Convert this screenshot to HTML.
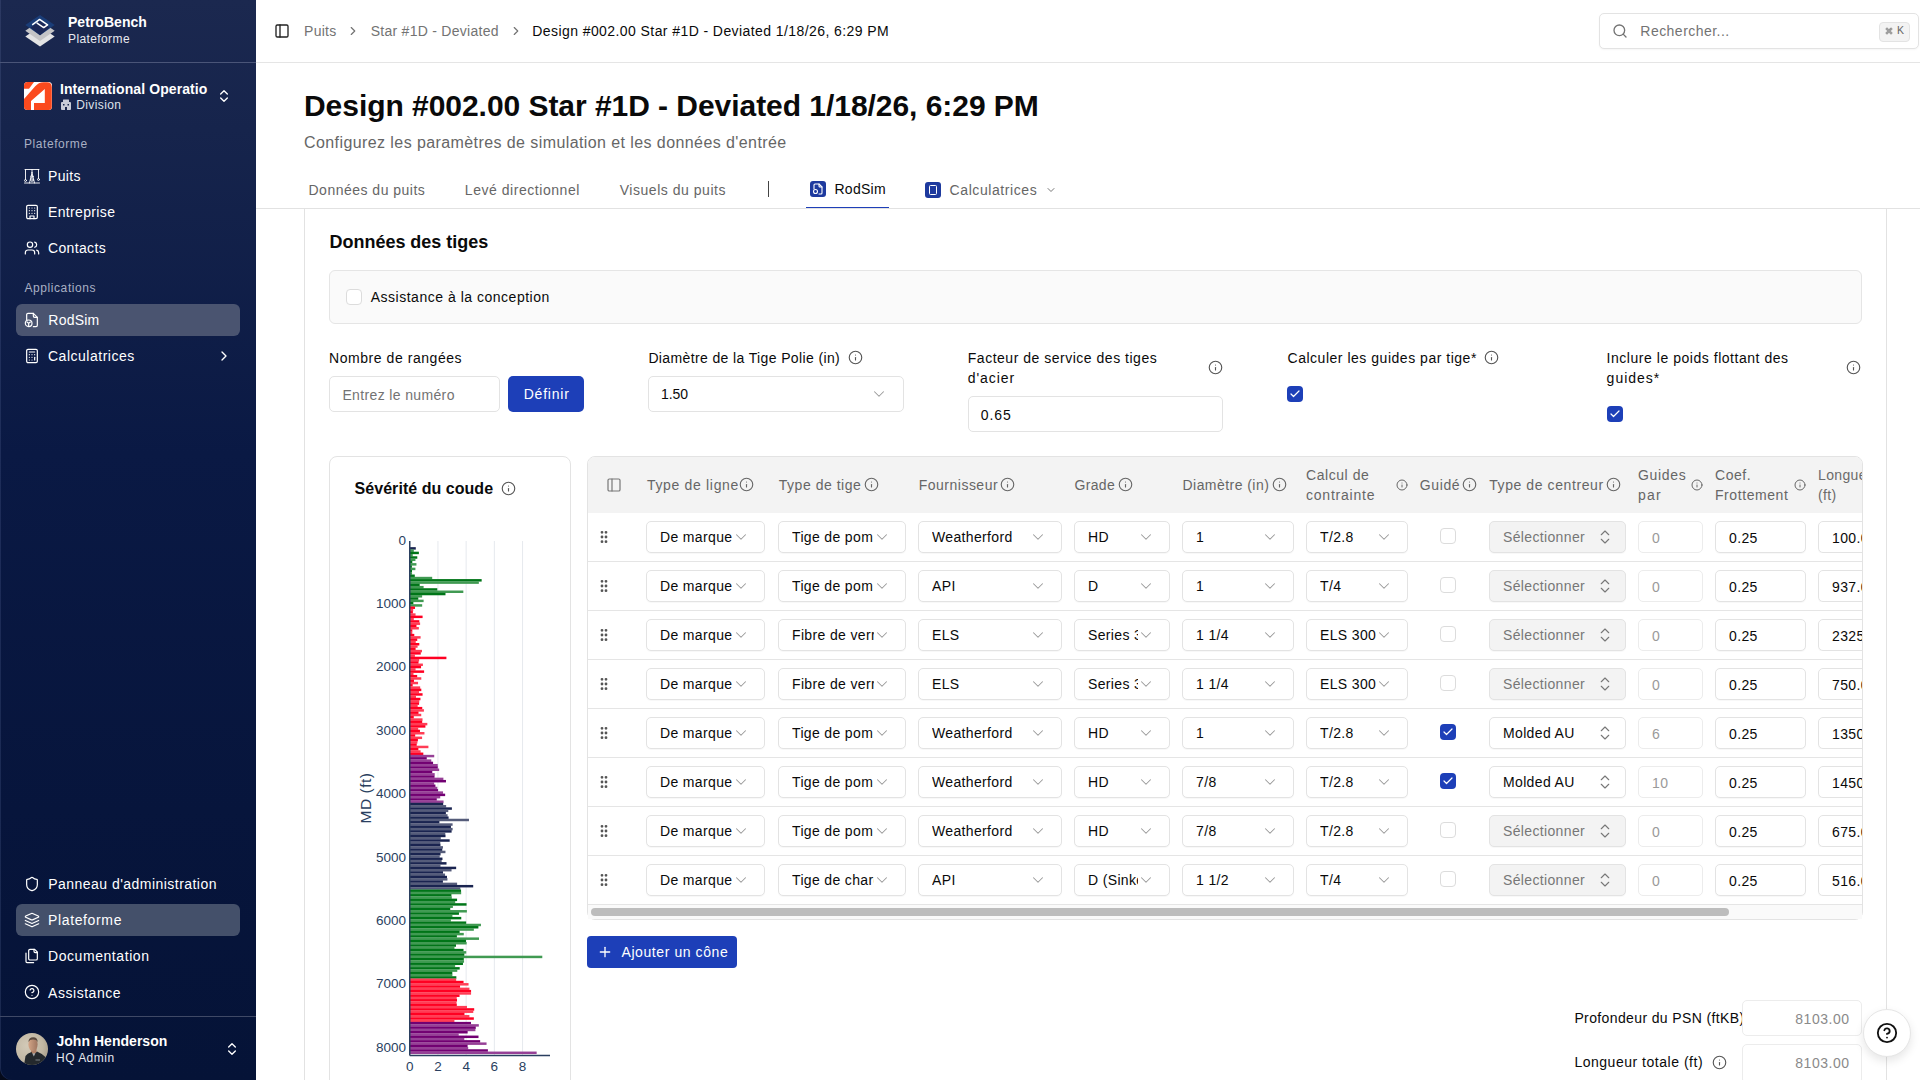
<!DOCTYPE html><html><head><meta charset="utf-8"><style>
*{box-sizing:border-box;margin:0;padding:0}
html,body{width:1920px;height:1080px;overflow:hidden;background:#fff;font-family:"Liberation Sans", sans-serif}
.t{position:absolute;white-space:nowrap}
.a{position:absolute}
.sel{position:absolute;height:32px;border:1px solid #e3e3e3;border-radius:5px;background:#fff;box-shadow:0 1px 1px rgba(0,0,0,0.03);overflow:hidden}
.sel .v{position:absolute;left:13px;top:0;line-height:30px;font-size:14px;color:#0a0a0a;white-space:nowrap;letter-spacing:0.35px}
</style></head><body>
<div class="a" style="left:0;top:0;width:256px;height:1080px;background:#050a1a"></div>
<div class="a" style="left:0;top:0;width:256px;height:1080px;border-bottom-left-radius:12px;box-shadow:inset 1px 0 0 rgba(120,140,190,0.18);background:linear-gradient(180deg,rgb(27,40,79) 0%,rgb(22,36,76) 12%,rgb(10,25,68) 42%,rgb(7,21,60) 75%,rgb(5,19,55) 100%);color:#fff">
<svg class="a" style="left:20px;top:10px" width="40" height="40" viewBox="0 0 40 40">
<polygon points="20,16.4 34.7,26.5 20,36.6 5.3,26.5" fill="#e3e3e4"/>
<polygon points="20,10.7 34.7,20.8 20,30.9 5.3,20.8" fill="#c4c4c6"/>
<polygon points="20,5 34.7,15.1 20,25.2 5.3,15.1" fill="#1a3d78"/>
<polygon points="20,11 29.5,17.6 20,25.2 10.5,17.6" fill="#1b2857"/>
<path d="M12.2 14.8 L19.6 9.4 L27.6 14.8 L23.7 17.6 L16.7 12.8" stroke="#fff" stroke-width="1.5" fill="none" stroke-linejoin="round"/>
</svg>
<div class="t" style="left:68px;top:15.15px;font-size:14px;line-height:14px;color:#fff;font-weight:700;letter-spacing:0.028px;">PetroBench</div>
<div class="t" style="left:68px;top:33.34px;font-size:12px;line-height:12px;color:#e8eaf0;font-weight:400;letter-spacing:0.393px;">Plateforme</div>
<div class="a" style="left:0;top:62px;width:256px;height:1px;background:#4a5578"></div>
<svg class="a" style="left:24px;top:82px" width="28" height="28" viewBox="0 0 28 28">
<defs><clipPath id="oc"><rect width="28" height="28" rx="3.5"/></clipPath></defs>
<g clip-path="url(#oc)"><rect width="28" height="28" fill="#fff"/>
<polygon points="0,0 10,0 5,6.8 0,6.8" fill="#fb4a1e"/>
<path d="M0 17 L11 4.6 Q14.6 0.3 19.5 0.3 H23 Q27.8 0.3 27.8 5.2 V28 H10 V21 H20.8 V7 L7 19 V28 H0 Z" fill="#fb4a1e"/></g>
</svg>
<div class="t" style="left:60px;top:81.65px;font-size:14px;line-height:14px;color:#fff;font-weight:700;letter-spacing:0.09px;">International Operatio</div>
<svg class="a" style="left:60px;top:99px" width="12" height="11" viewBox="0 0 12 11"><rect x="1" y="3" width="10" height="8" rx="1" fill="#c8ccd8"/><rect x="3" y="0.5" width="6" height="4" rx="0.5" fill="#c8ccd8"/><rect x="3" y="5" width="1.5" height="1.5" fill="#1b284f"/><rect x="7.5" y="5" width="1.5" height="1.5" fill="#1b284f"/><rect x="5" y="8" width="2" height="3" fill="#1b284f"/></svg>
<div class="t" style="left:76.25px;top:99.09px;font-size:12px;line-height:12px;color:#dfe2ea;font-weight:400;letter-spacing:0.396px;">Division</div>
<svg style="position:absolute;left:216px;top:88px" width="16" height="16" viewBox="0 0 24 24" fill="none" stroke="#fff" stroke-width="2" stroke-linecap="round" stroke-linejoin="round" ><path d="m7 15 5 5 5-5"/><path d="m7 9 5-5 5 5"/></svg>
<div class="t" style="left:24px;top:137.74px;font-size:12px;line-height:12px;color:#a9b0c4;font-weight:400;letter-spacing:0.559px;">Plateforme</div>
<svg style="position:absolute;left:24px;top:168px" width="16" height="16" viewBox="0 0 16 16" fill="none" stroke="#fff" stroke-width="0.9" stroke-linecap="round" stroke-linejoin="round" ><path d="M1 1.5h14"/><path d="M1.5 1.5v10M14.5 1.5v9"/><circle cx="1.5" cy="12.5" r="1"/><circle cx="14.5" cy="11.5" r="1"/><path d="M0.5 15h15"/><path d="M8 1.5v3"/><path d="M8 4.5L5.5 15M8 4.5l2.5 10.5"/><circle cx="8" cy="8.5" r="1"/><circle cx="8" cy="12" r="1.3"/></svg>
<div class="t" style="left:48px;top:169.40px;font-size:14px;line-height:14px;color:#fff;font-weight:400;letter-spacing:0.35px;">Puits</div>
<svg style="position:absolute;left:24px;top:203.8px" width="16" height="16" viewBox="0 0 24 24" fill="none" stroke="#fff" stroke-width="1.8" stroke-linecap="round" stroke-linejoin="round" ><rect width="16" height="20" x="4" y="2" rx="2" ry="2"/><path d="M9 22v-4h6v4"/><path d="M8 6h.01"/><path d="M16 6h.01"/><path d="M12 6h.01"/><path d="M12 10h.01"/><path d="M12 14h.01"/><path d="M16 10h.01"/><path d="M16 14h.01"/><path d="M8 10h.01"/><path d="M8 14h.01"/></svg>
<div class="t" style="left:48px;top:204.95px;font-size:14px;line-height:14px;color:#fff;font-weight:400;letter-spacing:0.35px;">Entreprise</div>
<svg style="position:absolute;left:24px;top:240.0px" width="16" height="16" viewBox="0 0 24 24" fill="none" stroke="#fff" stroke-width="1.8" stroke-linecap="round" stroke-linejoin="round" ><path d="M16 21v-2a4 4 0 0 0-4-4H6a4 4 0 0 0-4 4v2"/><circle cx="9" cy="7" r="4"/><path d="M22 21v-2a4 4 0 0 0-3-3.87"/><path d="M16 3.13a4 4 0 0 1 0 7.75"/></svg>
<div class="t" style="left:48px;top:241.15px;font-size:14px;line-height:14px;color:#fff;font-weight:400;letter-spacing:0.35px;">Contacts</div>
<div class="t" style="left:24.4px;top:281.94px;font-size:12px;line-height:12px;color:#a9b0c4;font-weight:400;letter-spacing:0.591px;">Applications</div>
<div class="a" style="left:16px;top:304px;width:224px;height:32px;border-radius:6px;background:#4a5470"></div>
<svg style="position:absolute;left:24px;top:312px" width="16" height="16" viewBox="0 0 24 24" fill="none" stroke="#fff" stroke-width="1.8" stroke-linecap="round" stroke-linejoin="round" ><path d="M14 2v4a2 2 0 0 0 2 2h4"/><path d="M4 12V4a2 2 0 0 1 2-2h8l6 6v12a2 2 0 0 1-2 2h-4"/><circle cx="7" cy="17" r="5"/><path d="M7 17l-2.5-2M7 17l2.5-2M7 17v4"/></svg>
<div class="t" style="left:48.3px;top:313.15px;font-size:14px;line-height:14px;color:#fff;font-weight:400;letter-spacing:0.224px;">RodSim</div>
<svg style="position:absolute;left:24px;top:348px" width="16" height="16" viewBox="0 0 24 24" fill="none" stroke="#fff" stroke-width="1.8" stroke-linecap="round" stroke-linejoin="round" ><rect width="16" height="20" x="4" y="2" rx="2"/><line x1="8" x2="16" y1="6" y2="6"/><line x1="16" x2="16" y1="14" y2="18"/><path d="M16 10h.01"/><path d="M12 10h.01"/><path d="M8 10h.01"/><path d="M12 14h.01"/><path d="M8 14h.01"/><path d="M12 18h.01"/><path d="M8 18h.01"/></svg>
<div class="t" style="left:48px;top:349.15px;font-size:14px;line-height:14px;color:#fff;font-weight:400;letter-spacing:0.508px;">Calculatrices</div>
<svg style="position:absolute;left:216px;top:348px" width="16" height="16" viewBox="0 0 24 24" fill="none" stroke="#fff" stroke-width="2" stroke-linecap="round" stroke-linejoin="round" ><path d="m9 18 6-6-6-6"/></svg>
<svg style="position:absolute;left:24px;top:876px" width="16" height="16" viewBox="0 0 24 24" fill="none" stroke="#fff" stroke-width="1.8" stroke-linecap="round" stroke-linejoin="round" ><path d="M20 13c0 5-3.5 7.5-7.66 8.95a1 1 0 0 1-.67-.01C7.5 20.5 4 18 4 13V6a1 1 0 0 1 1-1c2 0 4.5-1.2 6.24-2.72a1.17 1.17 0 0 1 1.52 0C14.51 3.81 17 5 19 5a1 1 0 0 1 1 1z"/></svg>
<div class="t" style="left:48.3px;top:877.25px;font-size:14px;line-height:14px;color:#fff;font-weight:400;letter-spacing:0.462px;">Panneau d'administration</div>
<div class="a" style="left:16px;top:904px;width:224px;height:32px;border-radius:6px;background:#44506a"></div>
<svg style="position:absolute;left:24px;top:912px" width="16" height="16" viewBox="0 0 24 24" fill="none" stroke="#fff" stroke-width="1.8" stroke-linecap="round" stroke-linejoin="round" ><path d="m12.83 2.18a2 2 0 0 0-1.66 0L2.6 6.08a1 1 0 0 0 0 1.83l8.58 3.91a2 2 0 0 0 1.66 0l8.58-3.9a1 1 0 0 0 0-1.83Z"/><path d="m22 17.65-9.17 4.16a2 2 0 0 1-1.66 0L2 17.65"/><path d="m22 12.65-9.17 4.16a2 2 0 0 1-1.66 0L2 12.65"/></svg>
<div class="t" style="left:48px;top:913.35px;font-size:14px;line-height:14px;color:#fff;font-weight:400;letter-spacing:0.636px;">Plateforme</div>
<svg style="position:absolute;left:24px;top:948px" width="16" height="16" viewBox="0 0 24 24" fill="none" stroke="#fff" stroke-width="1.8" stroke-linecap="round" stroke-linejoin="round" ><path d="M20 7h-3a2 2 0 0 1-2-2V2"/><path d="M9 18a2 2 0 0 1-2-2V4a2 2 0 0 1 2-2h7l4 4v10a2 2 0 0 1-2 2Z"/><path d="M3 7.6v12.8A1.6 1.6 0 0 0 4.6 22h9.8"/></svg>
<div class="t" style="left:48px;top:949.45px;font-size:14px;line-height:14px;color:#fff;font-weight:400;letter-spacing:0.565px;">Documentation</div>
<svg style="position:absolute;left:24px;top:984px" width="16" height="16" viewBox="0 0 24 24" fill="none" stroke="#fff" stroke-width="1.8" stroke-linecap="round" stroke-linejoin="round" ><circle cx="12" cy="12" r="10"/><path d="M9.09 9a3 3 0 0 1 5.83 1c0 2-3 3-3 3"/><path d="M12 17h.01"/></svg>
<div class="t" style="left:48px;top:985.65px;font-size:14px;line-height:14px;color:#fff;font-weight:400;letter-spacing:0.546px;">Assistance</div>
<div class="a" style="left:0;top:1016px;width:256px;height:1px;background:#3f4966"></div>
<svg class="a" style="left:16px;top:1033px" width="32" height="32" viewBox="0 0 32 32">
<defs><clipPath id="av"><circle cx="16" cy="16" r="16"/></clipPath>
<radialGradient id="avbg" cx="0.35" cy="0.4" r="0.7"><stop offset="0" stop-color="#d3cab8"/><stop offset="0.7" stop-color="#c1b7a3"/><stop offset="1" stop-color="#a99f8b"/></radialGradient>
<linearGradient id="face" x1="0" y1="0" x2="1" y2="0"><stop offset="0" stop-color="#d2a486"/><stop offset="1" stop-color="#9e7560"/></linearGradient></defs>
<g clip-path="url(#av)">
<rect width="32" height="32" fill="url(#avbg)"/>
<rect x="15" y="15" width="5.5" height="7" fill="#b08066"/>
<ellipse cx="17" cy="11.5" rx="4.6" ry="6.6" fill="url(#face)"/>
<path d="M12.4 9 Q12.6 4.2 17.2 4.2 Q21.6 4.3 21.7 9 Q20.5 6.5 17 6.6 Q13.6 6.6 12.4 9Z" fill="#5a4a3e"/>
<path d="M8 32 L9.5 23 Q11 20.5 15.5 19 L17.5 22 L21 18.5 Q27 21 30 24.5 L31 32 Z" fill="#24292d"/>
<path d="M16.3 20.5 L17.8 23.5 L19.4 20.2 Z" fill="#a7acb0"/>
<rect x="19.5" y="26.5" width="4.5" height="1" fill="#7d848a"/>
</g></svg>
<div class="t" style="left:56.4px;top:1034.15px;font-size:14px;line-height:14px;color:#fff;font-weight:700;letter-spacing:0.038px;">John Henderson</div>
<div class="t" style="left:56px;top:1052.14px;font-size:12px;line-height:12px;color:#e6e8ee;font-weight:400;letter-spacing:0.487px;">HQ Admin</div>
<svg style="position:absolute;left:224px;top:1041px" width="16" height="16" viewBox="0 0 24 24" fill="none" stroke="#fff" stroke-width="2" stroke-linecap="round" stroke-linejoin="round" ><path d="m7 15 5 5 5-5"/><path d="m7 9 5-5 5 5"/></svg>
</div>
<div class="a" style="left:256px;top:62px;width:1664px;height:1px;background:#e5e5e5"></div>
<svg style="position:absolute;left:274px;top:23px" width="16" height="16" viewBox="0 0 24 24" fill="none" stroke="#222" stroke-width="2" stroke-linecap="round" stroke-linejoin="round" ><rect width="18" height="18" x="3" y="3" rx="2"/><path d="M9 3v18"/></svg>
<div class="t" style="left:304px;top:24.05px;font-size:14px;line-height:14px;color:#737373;font-weight:400;letter-spacing:0.294px;">Puits</div>
<svg style="position:absolute;left:345.7px;top:24px" width="14" height="14" viewBox="0 0 24 24" fill="none" stroke="#737373" stroke-width="2" stroke-linecap="round" stroke-linejoin="round" ><path d="m9 18 6-6-6-6"/></svg>
<div class="t" style="left:370.7px;top:24.05px;font-size:14px;line-height:14px;color:#737373;font-weight:400;letter-spacing:0.272px;">Star #1D - Deviated</div>
<svg style="position:absolute;left:508.7px;top:24px" width="14" height="14" viewBox="0 0 24 24" fill="none" stroke="#737373" stroke-width="2" stroke-linecap="round" stroke-linejoin="round" ><path d="m9 18 6-6-6-6"/></svg>
<div class="t" style="left:532.3px;top:24.05px;font-size:14px;line-height:14px;color:#0a0a0a;font-weight:400;letter-spacing:0.42px;">Design #002.00 Star #1D - Deviated 1/18/26, 6:29 PM</div>
<div class="a" style="left:1599px;top:13px;width:320px;height:36px;border:1px solid #e3e3e3;border-radius:5px;background:#fff;box-shadow:0 1px 2px rgba(0,0,0,0.04)"></div>
<svg style="position:absolute;left:1612px;top:23px" width="16" height="16" viewBox="0 0 24 24" fill="none" stroke="#737373" stroke-width="2" stroke-linecap="round" stroke-linejoin="round" ><circle cx="11" cy="11" r="8"/><path d="m21 21-4.3-4.3"/></svg>
<div class="t" style="left:1640.3px;top:24.15px;font-size:14px;line-height:14px;color:#737373;font-weight:400;letter-spacing:0.472px;">Rechercher...</div>
<div class="a" style="left:1879px;top:22px;width:31px;height:20px;border:1px solid #e3e3e3;border-radius:4px;background:#f3f3f3"></div>
<svg style="position:absolute;left:1885.4px;top:27.3px" width="8" height="8" viewBox="0 0 24 24" fill="none" stroke="#666" stroke-width="2.2" stroke-linecap="round" stroke-linejoin="round" ><path d="M15 6v12a3 3 0 1 0 3-3H6a3 3 0 1 0 3 3V6a3 3 0 1 0-3 3h12a3 3 0 1 0-3-3"/></svg>
<div class="t" style="left:1897px;top:25.31px;font-size:10.5px;line-height:10.5px;color:#666;font-weight:400;letter-spacing:0px;">K</div>
<div class="t" style="left:304px;top:90.81px;font-size:30px;line-height:30px;color:#0a0a0a;font-weight:700;letter-spacing:-0.045px;">Design #002.00 Star #1D - Deviated 1/18/26, 6:29 PM</div>
<div class="t" style="left:304px;top:135.36px;font-size:16px;line-height:16px;color:#666;font-weight:400;letter-spacing:0.412px;">Configurez les paramètres de simulation et les données d'entrée</div>
<div class="t" style="left:308.5px;top:183.15px;font-size:14px;line-height:14px;color:#666;font-weight:400;letter-spacing:0.492px;">Données du puits</div>
<div class="t" style="left:464.8px;top:183.15px;font-size:14px;line-height:14px;color:#666;font-weight:400;letter-spacing:0.544px;">Levé directionnel</div>
<div class="t" style="left:619.7px;top:183.15px;font-size:14px;line-height:14px;color:#666;font-weight:400;letter-spacing:0.535px;">Visuels du puits</div>
<div class="a" style="left:767.5px;top:181px;width:1px;height:16px;background:#444"></div>
<div class="a" style="left:810px;top:181px;width:16px;height:16px;border-radius:3px;background:#1e3a9e"></div>
<svg style="position:absolute;left:812px;top:183px" width="12" height="12" viewBox="0 0 24 24" fill="none" stroke="#fff" stroke-width="2.2" stroke-linecap="round" stroke-linejoin="round" ><path d="M14 2v4a2 2 0 0 0 2 2h4"/><path d="M4 12V4a2 2 0 0 1 2-2h8l6 6v12a2 2 0 0 1-2 2h-4"/><circle cx="7" cy="17" r="4"/></svg>
<div class="t" style="left:834.5px;top:181.95px;font-size:14px;line-height:14px;color:#0a0a0a;font-weight:400;letter-spacing:0.264px;">RodSim</div>
<div class="a" style="left:806px;top:206.5px;width:83px;height:2px;background:#1e3fb8"></div>
<div class="a" style="left:925px;top:182px;width:16px;height:16px;border-radius:3px;background:#1e3a9e"></div>
<div class="a" style="left:929px;top:185px;width:8px;height:10px;border:1.5px solid #fff;border-radius:1.5px"></div>
<div class="t" style="left:949.6px;top:183.15px;font-size:14px;line-height:14px;color:#666;font-weight:400;letter-spacing:0.583px;">Calculatrices</div>
<svg style="position:absolute;left:1045px;top:184px" width="12" height="12" viewBox="0 0 24 24" fill="none" stroke="#777" stroke-width="2" stroke-linecap="round" stroke-linejoin="round" ><path d="m6 9 6 6 6-6"/></svg>
<div class="a" style="left:256px;top:208px;width:1664px;height:1px;background:#e2e2e2"></div>
<div class="a" style="left:304px;top:209px;width:1583px;height:900px;border-left:1px solid #e2e2e2;border-right:1px solid #e2e2e2"></div>
<div class="t" style="left:329.5px;top:232.96px;font-size:18px;line-height:18px;color:#0a0a0a;font-weight:700;letter-spacing:-0.019px;">Données des tiges</div>
<div class="a" style="left:329px;top:270px;width:1533px;height:54px;border:1px solid #e5e5e5;border-radius:6px;background:#fafafa"></div>
<div class="a" style="left:346px;top:289px;width:16px;height:16px;border:1px solid #dcdcdc;border-radius:4px;background:#fff"></div>
<div class="t" style="left:370.7px;top:289.85px;font-size:14px;line-height:14px;color:#0a0a0a;font-weight:400;letter-spacing:0.515px;">Assistance à la conception</div>
<div class="t" style="left:329px;top:351.15px;font-size:14px;line-height:14px;color:#0a0a0a;font-weight:400;letter-spacing:0.552px;">Nombre de rangées</div>
<div class="a" style="left:329px;top:376px;width:171px;height:36px;border:1px solid #e3e3e3;border-radius:5px;background:#fff"></div>
<div class="t" style="left:342.4px;top:388.15px;font-size:14px;line-height:14px;color:#737373;font-weight:400;letter-spacing:0.362px;">Entrez le numéro</div>
<div class="a" style="left:508px;top:376px;width:76px;height:36px;border-radius:5px;background:#1d3fb8"></div>
<div class="t" style="left:523.7px;top:387.15px;font-size:14px;line-height:14px;color:#fff;font-weight:400;letter-spacing:0.777px;">Définir</div>
<div class="t" style="left:648.4px;top:351.15px;font-size:14px;line-height:14px;color:#0a0a0a;font-weight:400;letter-spacing:0.374px;">Diamètre de la Tige Polie (in)</div>
<svg style="position:absolute;left:848px;top:350px" width="15" height="15" viewBox="0 0 24 24" fill="none" stroke="#555" stroke-width="1.8" stroke-linecap="round" stroke-linejoin="round" ><circle cx="12" cy="12" r="10"/><path d="M12 16v-4"/><path d="M12 8h.01"/></svg>
<div class="a" style="left:648px;top:376px;width:256px;height:36px;border:1px solid #e3e3e3;border-radius:5px;background:#fff"></div>
<div class="t" style="left:661px;top:387.15px;font-size:14px;line-height:14px;color:#0a0a0a;font-weight:400;letter-spacing:-0.045px;">1.50</div>
<svg style="position:absolute;left:869.5px;top:384.5px" width="18" height="18" viewBox="0 0 24 24" fill="none" stroke="#999" stroke-width="1.4" stroke-linecap="round" stroke-linejoin="round" ><path d="m6 9 6 6 6-6"/></svg>
<div class="t" style="left:967.8px;top:351.15px;font-size:14px;line-height:14px;color:#0a0a0a;font-weight:400;letter-spacing:0.511px;">Facteur de service des tiges</div>
<div class="t" style="left:967.8px;top:371.15px;font-size:14px;line-height:14px;color:#0a0a0a;font-weight:400;letter-spacing:0.92px;">d'acier</div>
<svg style="position:absolute;left:1208px;top:360px" width="15" height="15" viewBox="0 0 24 24" fill="none" stroke="#555" stroke-width="1.8" stroke-linecap="round" stroke-linejoin="round" ><circle cx="12" cy="12" r="10"/><path d="M12 16v-4"/><path d="M12 8h.01"/></svg>
<div class="a" style="left:968px;top:396px;width:255px;height:36px;border:1px solid #e3e3e3;border-radius:5px;background:#fff"></div>
<div class="t" style="left:980.7px;top:408.15px;font-size:14px;line-height:14px;color:#0a0a0a;font-weight:400;letter-spacing:0.922px;">0.65</div>
<div class="t" style="left:1287.5px;top:351.15px;font-size:14px;line-height:14px;color:#0a0a0a;font-weight:400;letter-spacing:0.52px;">Calculer les guides par tige*</div>
<svg style="position:absolute;left:1484px;top:350px" width="15" height="15" viewBox="0 0 24 24" fill="none" stroke="#555" stroke-width="1.8" stroke-linecap="round" stroke-linejoin="round" ><circle cx="12" cy="12" r="10"/><path d="M12 16v-4"/><path d="M12 8h.01"/></svg>
<div class="a" style="left:1287px;top:386px;width:16px;height:16px;border-radius:4px;background:#1d3fb8"></div><svg style="position:absolute;left:1289px;top:388px" width="12" height="12" viewBox="0 0 24 24" fill="none" stroke="#fff" stroke-width="2.4" stroke-linecap="round" stroke-linejoin="round" ><path d="M20 6 9 17l-5-5"/></svg>
<div class="t" style="left:1606.6px;top:351.15px;font-size:14px;line-height:14px;color:#0a0a0a;font-weight:400;letter-spacing:0.533px;">Inclure le poids flottant des</div>
<div class="t" style="left:1606.6px;top:371.15px;font-size:14px;line-height:14px;color:#0a0a0a;font-weight:400;letter-spacing:1.002px;">guides*</div>
<svg style="position:absolute;left:1846px;top:360px" width="15" height="15" viewBox="0 0 24 24" fill="none" stroke="#555" stroke-width="1.8" stroke-linecap="round" stroke-linejoin="round" ><circle cx="12" cy="12" r="10"/><path d="M12 16v-4"/><path d="M12 8h.01"/></svg>
<div class="a" style="left:1607px;top:406px;width:16px;height:16px;border-radius:4px;background:#1d3fb8"></div><svg style="position:absolute;left:1609px;top:408px" width="12" height="12" viewBox="0 0 24 24" fill="none" stroke="#fff" stroke-width="2.4" stroke-linecap="round" stroke-linejoin="round" ><path d="M20 6 9 17l-5-5"/></svg>
<div class="a" style="left:329px;top:456px;width:242px;height:700px;border:1px solid #e3e3e3;border-radius:8px;background:#fff"></div>
<div class="t" style="left:354.6px;top:481.26px;font-size:16px;line-height:16px;color:#0a0a0a;font-weight:700;letter-spacing:0.041px;">Sévérité du coude</div>
<svg style="position:absolute;left:501px;top:481px" width="15" height="15" viewBox="0 0 24 24" fill="none" stroke="#555" stroke-width="1.8" stroke-linecap="round" stroke-linejoin="round" ><circle cx="12" cy="12" r="10"/><path d="M12 16v-4"/><path d="M12 8h.01"/></svg>
<svg class="a" style="left:329px;top:456px" width="242" height="624" viewBox="329 456 242 624"><line x1="437.95" y1="541" x2="437.95" y2="1055" stroke="#e6e9ee" stroke-width="1"/><line x1="466.15" y1="541" x2="466.15" y2="1055" stroke="#e6e9ee" stroke-width="1"/><line x1="494.35" y1="541" x2="494.35" y2="1055" stroke="#e6e9ee" stroke-width="1"/><line x1="522.55" y1="541" x2="522.55" y2="1055" stroke="#e6e9ee" stroke-width="1"/><rect x="409.75" y="547.14" width="6.04" height="2.48" fill="#1a2450"/><rect x="409.75" y="549.42" width="4.06" height="2.48" fill="#409a52"/><rect x="409.75" y="551.70" width="9.13" height="2.48" fill="#007518"/><rect x="409.75" y="553.99" width="3.02" height="2.48" fill="#409a52"/><rect x="409.75" y="556.27" width="7.54" height="2.48" fill="#007518"/><rect x="409.75" y="558.55" width="5.68" height="2.48" fill="#409a52"/><rect x="409.75" y="560.83" width="2.55" height="2.48" fill="#007518"/><rect x="409.75" y="563.12" width="6.69" height="2.48" fill="#409a52"/><rect x="409.75" y="565.40" width="2.15" height="2.48" fill="#007518"/><rect x="409.75" y="567.68" width="5.64" height="2.48" fill="#409a52"/><rect x="409.75" y="569.96" width="2.24" height="2.48" fill="#007518"/><rect x="409.75" y="572.25" width="2.31" height="2.48" fill="#409a52"/><rect x="409.75" y="574.53" width="5.04" height="2.48" fill="#007518"/><rect x="409.75" y="576.81" width="22.45" height="2.48" fill="#409a52"/><rect x="409.75" y="579.09" width="71.91" height="2.48" fill="#007518"/><rect x="409.75" y="581.38" width="69.09" height="2.48" fill="#409a52"/><rect x="409.75" y="583.66" width="9.95" height="2.48" fill="#007518"/><rect x="409.75" y="585.94" width="13.85" height="2.48" fill="#409a52"/><rect x="409.75" y="588.22" width="27.54" height="2.48" fill="#007518"/><rect x="409.75" y="590.51" width="53.58" height="2.48" fill="#409a52"/><rect x="409.75" y="592.79" width="35.73" height="2.48" fill="#007518"/><rect x="409.75" y="595.07" width="12.38" height="2.48" fill="#409a52"/><rect x="409.75" y="597.35" width="8.52" height="2.48" fill="#007518"/><rect x="409.75" y="599.64" width="13.86" height="2.48" fill="#409a52"/><rect x="409.75" y="601.92" width="3.61" height="2.48" fill="#007518"/><rect x="409.75" y="604.20" width="12.42" height="2.48" fill="#409a52"/><rect x="409.75" y="606.48" width="5.26" height="2.48" fill="#ff0022"/><rect x="409.75" y="608.76" width="3.47" height="2.48" fill="#ff3d55"/><rect x="409.75" y="611.05" width="3.12" height="2.48" fill="#ff0022"/><rect x="409.75" y="613.33" width="5.80" height="2.48" fill="#ff3d55"/><rect x="409.75" y="615.61" width="12.84" height="2.48" fill="#ff0022"/><rect x="409.75" y="617.89" width="4.06" height="2.48" fill="#ff3d55"/><rect x="409.75" y="620.18" width="9.58" height="2.48" fill="#ff0022"/><rect x="409.75" y="622.46" width="10.35" height="2.48" fill="#ff3d55"/><rect x="409.75" y="624.74" width="6.72" height="2.48" fill="#ff0022"/><rect x="409.75" y="627.02" width="9.10" height="2.48" fill="#ff3d55"/><rect x="409.75" y="629.31" width="2.56" height="2.48" fill="#ff0022"/><rect x="409.75" y="631.59" width="2.55" height="2.48" fill="#ff3d55"/><rect x="409.75" y="633.87" width="4.53" height="2.48" fill="#ff0022"/><rect x="409.75" y="636.15" width="10.85" height="2.48" fill="#ff3d55"/><rect x="409.75" y="638.44" width="7.49" height="2.48" fill="#ff0022"/><rect x="409.75" y="640.72" width="6.00" height="2.48" fill="#ff3d55"/><rect x="409.75" y="643.00" width="9.57" height="2.48" fill="#ff0022"/><rect x="409.75" y="645.28" width="7.84" height="2.48" fill="#ff3d55"/><rect x="409.75" y="647.57" width="5.85" height="2.48" fill="#ff0022"/><rect x="409.75" y="649.85" width="12.24" height="2.48" fill="#ff3d55"/><rect x="409.75" y="652.13" width="11.00" height="2.48" fill="#ff0022"/><rect x="409.75" y="654.41" width="5.17" height="2.48" fill="#ff3d55"/><rect x="409.75" y="656.70" width="36.66" height="2.48" fill="#ff0022"/><rect x="409.75" y="658.98" width="9.38" height="2.48" fill="#ff3d55"/><rect x="409.75" y="661.26" width="8.76" height="2.48" fill="#ff0022"/><rect x="409.75" y="663.54" width="13.14" height="2.48" fill="#ff3d55"/><rect x="409.75" y="665.82" width="11.30" height="2.48" fill="#ff0022"/><rect x="409.75" y="668.11" width="5.81" height="2.48" fill="#ff3d55"/><rect x="409.75" y="670.39" width="14.36" height="2.48" fill="#ff0022"/><rect x="409.75" y="672.67" width="3.74" height="2.48" fill="#ff3d55"/><rect x="409.75" y="674.95" width="7.43" height="2.48" fill="#ff0022"/><rect x="409.75" y="677.24" width="11.55" height="2.48" fill="#ff3d55"/><rect x="409.75" y="679.52" width="4.22" height="2.48" fill="#ff0022"/><rect x="409.75" y="681.80" width="8.30" height="2.48" fill="#ff3d55"/><rect x="409.75" y="684.08" width="2.92" height="2.48" fill="#ff0022"/><rect x="409.75" y="686.37" width="10.43" height="2.48" fill="#ff3d55"/><rect x="409.75" y="688.65" width="11.56" height="2.48" fill="#ff0022"/><rect x="409.75" y="690.93" width="9.28" height="2.48" fill="#ff3d55"/><rect x="409.75" y="693.21" width="12.82" height="2.48" fill="#ff0022"/><rect x="409.75" y="695.50" width="6.25" height="2.48" fill="#ff3d55"/><rect x="409.75" y="697.78" width="10.68" height="2.48" fill="#ff0022"/><rect x="409.75" y="700.06" width="9.51" height="2.48" fill="#ff3d55"/><rect x="409.75" y="702.34" width="9.33" height="2.48" fill="#ff0022"/><rect x="409.75" y="704.63" width="7.92" height="2.48" fill="#ff3d55"/><rect x="409.75" y="706.91" width="12.50" height="2.48" fill="#ff0022"/><rect x="409.75" y="709.19" width="14.17" height="2.48" fill="#ff3d55"/><rect x="409.75" y="711.47" width="8.74" height="2.48" fill="#ff0022"/><rect x="409.75" y="713.76" width="11.49" height="2.48" fill="#ff3d55"/><rect x="409.75" y="716.04" width="4.02" height="2.48" fill="#ff0022"/><rect x="409.75" y="718.32" width="12.77" height="2.48" fill="#ff3d55"/><rect x="409.75" y="720.60" width="12.44" height="2.48" fill="#ff0022"/><rect x="409.75" y="722.88" width="17.58" height="2.48" fill="#ff3d55"/><rect x="409.75" y="725.17" width="15.65" height="2.48" fill="#ff0022"/><rect x="409.75" y="727.45" width="8.45" height="2.48" fill="#ff3d55"/><rect x="409.75" y="729.73" width="10.21" height="2.48" fill="#ff0022"/><rect x="409.75" y="732.01" width="14.69" height="2.48" fill="#ff3d55"/><rect x="409.75" y="734.30" width="5.44" height="2.48" fill="#ff0022"/><rect x="409.75" y="736.58" width="12.34" height="2.48" fill="#ff3d55"/><rect x="409.75" y="738.86" width="8.16" height="2.48" fill="#ff0022"/><rect x="409.75" y="741.14" width="7.64" height="2.48" fill="#ff3d55"/><rect x="409.75" y="743.43" width="6.97" height="2.48" fill="#ff0022"/><rect x="409.75" y="745.71" width="18.66" height="2.48" fill="#ff3d55"/><rect x="409.75" y="747.99" width="8.62" height="2.48" fill="#ff0022"/><rect x="409.75" y="750.27" width="10.85" height="2.48" fill="#ff3d55"/><rect x="409.75" y="752.56" width="13.56" height="2.48" fill="#ff0022"/><rect x="409.75" y="754.84" width="24.48" height="2.48" fill="#964096"/><rect x="409.75" y="757.12" width="17.00" height="2.48" fill="#720072"/><rect x="409.75" y="759.40" width="21.53" height="2.48" fill="#964096"/><rect x="409.75" y="761.69" width="23.32" height="2.48" fill="#720072"/><rect x="409.75" y="763.97" width="27.98" height="2.48" fill="#964096"/><rect x="409.75" y="766.25" width="28.03" height="2.48" fill="#720072"/><rect x="409.75" y="768.53" width="29.42" height="2.48" fill="#964096"/><rect x="409.75" y="770.82" width="22.52" height="2.48" fill="#720072"/><rect x="409.75" y="773.10" width="24.96" height="2.48" fill="#964096"/><rect x="409.75" y="775.38" width="24.80" height="2.48" fill="#720072"/><rect x="409.75" y="777.66" width="33.64" height="2.48" fill="#964096"/><rect x="409.75" y="779.94" width="36.22" height="2.48" fill="#720072"/><rect x="409.75" y="782.23" width="24.40" height="2.48" fill="#964096"/><rect x="409.75" y="784.51" width="25.68" height="2.48" fill="#720072"/><rect x="409.75" y="786.79" width="27.55" height="2.48" fill="#964096"/><rect x="409.75" y="789.07" width="28.32" height="2.48" fill="#720072"/><rect x="409.75" y="791.36" width="33.28" height="2.48" fill="#964096"/><rect x="409.75" y="793.64" width="35.40" height="2.48" fill="#720072"/><rect x="409.75" y="795.92" width="30.46" height="2.48" fill="#964096"/><rect x="409.75" y="798.20" width="27.02" height="2.48" fill="#720072"/><rect x="409.75" y="800.49" width="33.80" height="2.48" fill="#964096"/><rect x="409.75" y="802.77" width="33.44" height="2.48" fill="#1a2450"/><rect x="409.75" y="805.05" width="36.39" height="2.48" fill="#555c7a"/><rect x="409.75" y="807.33" width="42.14" height="2.48" fill="#1a2450"/><rect x="409.75" y="809.62" width="38.53" height="2.48" fill="#555c7a"/><rect x="409.75" y="811.90" width="36.12" height="2.48" fill="#1a2450"/><rect x="409.75" y="814.18" width="37.80" height="2.48" fill="#555c7a"/><rect x="409.75" y="816.46" width="38.85" height="2.48" fill="#1a2450"/><rect x="409.75" y="818.75" width="59.22" height="2.48" fill="#555c7a"/><rect x="409.75" y="821.03" width="29.65" height="2.48" fill="#1a2450"/><rect x="409.75" y="823.31" width="42.85" height="2.48" fill="#555c7a"/><rect x="409.75" y="825.59" width="41.18" height="2.48" fill="#1a2450"/><rect x="409.75" y="827.88" width="42.87" height="2.48" fill="#555c7a"/><rect x="409.75" y="830.16" width="41.86" height="2.48" fill="#1a2450"/><rect x="409.75" y="832.44" width="35.52" height="2.48" fill="#555c7a"/><rect x="409.75" y="834.72" width="35.76" height="2.48" fill="#1a2450"/><rect x="409.75" y="837.00" width="31.05" height="2.48" fill="#555c7a"/><rect x="409.75" y="839.29" width="39.93" height="2.48" fill="#1a2450"/><rect x="409.75" y="841.57" width="30.55" height="2.48" fill="#555c7a"/><rect x="409.75" y="843.85" width="30.72" height="2.48" fill="#1a2450"/><rect x="409.75" y="846.13" width="33.21" height="2.48" fill="#555c7a"/><rect x="409.75" y="848.42" width="32.52" height="2.48" fill="#1a2450"/><rect x="409.75" y="850.70" width="35.70" height="2.48" fill="#555c7a"/><rect x="409.75" y="852.98" width="30.80" height="2.48" fill="#1a2450"/><rect x="409.75" y="855.26" width="29.96" height="2.48" fill="#555c7a"/><rect x="409.75" y="857.55" width="32.72" height="2.48" fill="#1a2450"/><rect x="409.75" y="859.83" width="31.93" height="2.48" fill="#555c7a"/><rect x="409.75" y="862.11" width="36.76" height="2.48" fill="#1a2450"/><rect x="409.75" y="864.39" width="30.73" height="2.48" fill="#555c7a"/><rect x="409.75" y="866.68" width="46.40" height="2.48" fill="#1a2450"/><rect x="409.75" y="868.96" width="41.79" height="2.48" fill="#555c7a"/><rect x="409.75" y="871.24" width="33.26" height="2.48" fill="#1a2450"/><rect x="409.75" y="873.52" width="35.31" height="2.48" fill="#555c7a"/><rect x="409.75" y="875.81" width="37.23" height="2.48" fill="#1a2450"/><rect x="409.75" y="878.09" width="37.68" height="2.48" fill="#555c7a"/><rect x="409.75" y="880.37" width="33.16" height="2.48" fill="#1a2450"/><rect x="409.75" y="882.65" width="47.36" height="2.48" fill="#555c7a"/><rect x="409.75" y="884.94" width="63.45" height="2.48" fill="#1a2450"/><rect x="409.75" y="887.22" width="50.61" height="2.48" fill="#555c7a"/><rect x="409.75" y="889.50" width="51.31" height="2.48" fill="#007518"/><rect x="409.75" y="891.78" width="51.43" height="2.48" fill="#409a52"/><rect x="409.75" y="894.06" width="41.66" height="2.48" fill="#007518"/><rect x="409.75" y="896.35" width="42.04" height="2.48" fill="#409a52"/><rect x="409.75" y="898.63" width="47.33" height="2.48" fill="#007518"/><rect x="409.75" y="900.91" width="45.46" height="2.48" fill="#409a52"/><rect x="409.75" y="903.19" width="56.81" height="2.48" fill="#007518"/><rect x="409.75" y="905.48" width="43.15" height="2.48" fill="#409a52"/><rect x="409.75" y="907.76" width="40.50" height="2.48" fill="#007518"/><rect x="409.75" y="910.04" width="57.13" height="2.48" fill="#409a52"/><rect x="409.75" y="912.32" width="49.21" height="2.48" fill="#007518"/><rect x="409.75" y="914.61" width="42.66" height="2.48" fill="#409a52"/><rect x="409.75" y="916.89" width="51.52" height="2.48" fill="#007518"/><rect x="409.75" y="919.17" width="41.13" height="2.48" fill="#409a52"/><rect x="409.75" y="921.45" width="56.42" height="2.48" fill="#007518"/><rect x="409.75" y="923.74" width="71.18" height="2.48" fill="#409a52"/><rect x="409.75" y="926.02" width="68.64" height="2.48" fill="#007518"/><rect x="409.75" y="928.30" width="64.09" height="2.48" fill="#409a52"/><rect x="409.75" y="930.58" width="49.86" height="2.48" fill="#007518"/><rect x="409.75" y="932.87" width="54.02" height="2.48" fill="#409a52"/><rect x="409.75" y="935.15" width="47.13" height="2.48" fill="#007518"/><rect x="409.75" y="937.43" width="69.26" height="2.48" fill="#409a52"/><rect x="409.75" y="939.71" width="56.22" height="2.48" fill="#007518"/><rect x="409.75" y="942.00" width="56.90" height="2.48" fill="#409a52"/><rect x="409.75" y="944.28" width="46.25" height="2.48" fill="#007518"/><rect x="409.75" y="946.56" width="44.71" height="2.48" fill="#409a52"/><rect x="409.75" y="948.84" width="53.76" height="2.48" fill="#007518"/><rect x="409.75" y="951.12" width="56.49" height="2.48" fill="#409a52"/><rect x="409.75" y="953.41" width="54.57" height="2.48" fill="#007518"/><rect x="409.75" y="955.69" width="132.54" height="2.48" fill="#409a52"/><rect x="409.75" y="957.97" width="54.04" height="2.48" fill="#007518"/><rect x="409.75" y="960.25" width="54.32" height="2.48" fill="#409a52"/><rect x="409.75" y="962.54" width="53.20" height="2.48" fill="#007518"/><rect x="409.75" y="964.82" width="45.39" height="2.48" fill="#409a52"/><rect x="409.75" y="967.10" width="49.96" height="2.48" fill="#007518"/><rect x="409.75" y="969.38" width="47.54" height="2.48" fill="#409a52"/><rect x="409.75" y="971.67" width="42.57" height="2.48" fill="#007518"/><rect x="409.75" y="973.95" width="42.63" height="2.48" fill="#409a52"/><rect x="409.75" y="976.23" width="46.60" height="2.48" fill="#007518"/><rect x="409.75" y="978.51" width="46.43" height="2.48" fill="#ff3d55"/><rect x="409.75" y="980.80" width="53.79" height="2.48" fill="#ff0022"/><rect x="409.75" y="983.08" width="58.80" height="2.48" fill="#ff3d55"/><rect x="409.75" y="985.36" width="50.31" height="2.48" fill="#ff0022"/><rect x="409.75" y="987.64" width="59.71" height="2.48" fill="#ff3d55"/><rect x="409.75" y="989.93" width="61.32" height="2.48" fill="#ff0022"/><rect x="409.75" y="992.21" width="61.32" height="2.48" fill="#ff3d55"/><rect x="409.75" y="994.49" width="49.81" height="2.48" fill="#ff0022"/><rect x="409.75" y="996.77" width="46.99" height="2.48" fill="#ff3d55"/><rect x="409.75" y="999.06" width="47.27" height="2.48" fill="#ff0022"/><rect x="409.75" y="1001.34" width="46.74" height="2.48" fill="#ff3d55"/><rect x="409.75" y="1003.62" width="47.05" height="2.48" fill="#ff0022"/><rect x="409.75" y="1005.90" width="57.23" height="2.48" fill="#ff3d55"/><rect x="409.75" y="1008.18" width="64.44" height="2.48" fill="#ff0022"/><rect x="409.75" y="1010.47" width="63.52" height="2.48" fill="#ff3d55"/><rect x="409.75" y="1012.75" width="54.73" height="2.48" fill="#ff0022"/><rect x="409.75" y="1015.03" width="59.66" height="2.48" fill="#ff3d55"/><rect x="409.75" y="1017.31" width="64.09" height="2.48" fill="#ff0022"/><rect x="409.75" y="1019.60" width="44.67" height="2.48" fill="#ff3d55"/><rect x="409.75" y="1021.88" width="61.26" height="2.48" fill="#720072"/><rect x="409.75" y="1024.16" width="69.07" height="2.48" fill="#964096"/><rect x="409.75" y="1026.44" width="66.00" height="2.48" fill="#720072"/><rect x="409.75" y="1028.73" width="65.66" height="2.48" fill="#964096"/><rect x="409.75" y="1031.01" width="57.89" height="2.48" fill="#720072"/><rect x="409.75" y="1033.29" width="48.96" height="2.48" fill="#964096"/><rect x="409.75" y="1035.57" width="68.75" height="2.48" fill="#720072"/><rect x="409.75" y="1037.86" width="54.55" height="2.48" fill="#964096"/><rect x="409.75" y="1040.14" width="70.41" height="2.48" fill="#720072"/><rect x="409.75" y="1042.42" width="76.81" height="2.48" fill="#964096"/><rect x="409.75" y="1044.70" width="57.85" height="2.48" fill="#720072"/><rect x="409.75" y="1046.99" width="58.45" height="2.48" fill="#964096"/><rect x="409.75" y="1049.27" width="78.15" height="2.48" fill="#720072"/><rect x="409.75" y="1051.55" width="126.90" height="2.48" fill="#964096"/><line x1="409.75" y1="541" x2="409.75" y2="1055.5" stroke="#2a3f5f" stroke-width="1.5"/><line x1="409.75" y1="1055.5" x2="550" y2="1055.5" stroke="#2a3f5f" stroke-width="1.5"/><text x="406" y="544.60" text-anchor="end" font-family="Liberation Sans" font-size="13.5" fill="#2a3f5f">0</text><text x="406" y="608.00" text-anchor="end" font-family="Liberation Sans" font-size="13.5" fill="#2a3f5f">1000</text><text x="406" y="671.40" text-anchor="end" font-family="Liberation Sans" font-size="13.5" fill="#2a3f5f">2000</text><text x="406" y="734.80" text-anchor="end" font-family="Liberation Sans" font-size="13.5" fill="#2a3f5f">3000</text><text x="406" y="798.20" text-anchor="end" font-family="Liberation Sans" font-size="13.5" fill="#2a3f5f">4000</text><text x="406" y="861.60" text-anchor="end" font-family="Liberation Sans" font-size="13.5" fill="#2a3f5f">5000</text><text x="406" y="925.00" text-anchor="end" font-family="Liberation Sans" font-size="13.5" fill="#2a3f5f">6000</text><text x="406" y="988.40" text-anchor="end" font-family="Liberation Sans" font-size="13.5" fill="#2a3f5f">7000</text><text x="406" y="1051.80" text-anchor="end" font-family="Liberation Sans" font-size="13.5" fill="#2a3f5f">8000</text><text x="409.75" y="1071" text-anchor="middle" font-family="Liberation Sans" font-size="13.5" fill="#2a3f5f">0</text><text x="437.95" y="1071" text-anchor="middle" font-family="Liberation Sans" font-size="13.5" fill="#2a3f5f">2</text><text x="466.15" y="1071" text-anchor="middle" font-family="Liberation Sans" font-size="13.5" fill="#2a3f5f">4</text><text x="494.35" y="1071" text-anchor="middle" font-family="Liberation Sans" font-size="13.5" fill="#2a3f5f">6</text><text x="522.55" y="1071" text-anchor="middle" font-family="Liberation Sans" font-size="13.5" fill="#2a3f5f">8</text><text x="371" y="798" text-anchor="middle" transform="rotate(-90 371 798)" font-family="Liberation Sans" font-size="15.5" letter-spacing="0.5" fill="#2a3f5f">MD (ft)</text></svg>
<div class="a" style="left:587px;top:456px;width:1276px;height:464px;border:1px solid #e3e3e3;border-radius:8px;background:#fff;overflow:hidden">
<div class="a" style="left:0;top:0;width:1276px;height:56px;background:#f3f3f3"></div>
</div>
<svg style="position:absolute;left:606px;top:477px" width="16" height="16" viewBox="0 0 24 24" fill="none" stroke="#777" stroke-width="1.8" stroke-linecap="round" stroke-linejoin="round" ><rect width="18" height="18" x="3" y="3" rx="2"/><path d="M9 3v18"/></svg>
<div class="t" style="left:647px;top:478.15px;font-size:14px;line-height:14px;color:#666;font-weight:400;letter-spacing:0.671px;">Type de ligne</div>
<svg style="position:absolute;left:738.5px;top:477px" width="15" height="15" viewBox="0 0 24 24" fill="none" stroke="#666" stroke-width="1.8" stroke-linecap="round" stroke-linejoin="round" ><circle cx="12" cy="12" r="10"/><path d="M12 16v-4"/><path d="M12 8h.01"/></svg>
<div class="t" style="left:778.75px;top:478.15px;font-size:14px;line-height:14px;color:#666;font-weight:400;letter-spacing:0.527px;">Type de tige</div>
<svg style="position:absolute;left:863.5px;top:477px" width="15" height="15" viewBox="0 0 24 24" fill="none" stroke="#666" stroke-width="1.8" stroke-linecap="round" stroke-linejoin="round" ><circle cx="12" cy="12" r="10"/><path d="M12 16v-4"/><path d="M12 8h.01"/></svg>
<div class="t" style="left:918.75px;top:478.15px;font-size:14px;line-height:14px;color:#666;font-weight:400;letter-spacing:0.492px;">Fournisseur</div>
<svg style="position:absolute;left:999.5px;top:477px" width="15" height="15" viewBox="0 0 24 24" fill="none" stroke="#666" stroke-width="1.8" stroke-linecap="round" stroke-linejoin="round" ><circle cx="12" cy="12" r="10"/><path d="M12 16v-4"/><path d="M12 8h.01"/></svg>
<div class="t" style="left:1074.4px;top:478.15px;font-size:14px;line-height:14px;color:#666;font-weight:400;letter-spacing:0.377px;">Grade</div>
<svg style="position:absolute;left:1117.5px;top:477px" width="15" height="15" viewBox="0 0 24 24" fill="none" stroke="#666" stroke-width="1.8" stroke-linecap="round" stroke-linejoin="round" ><circle cx="12" cy="12" r="10"/><path d="M12 16v-4"/><path d="M12 8h.01"/></svg>
<div class="t" style="left:1182.5px;top:478.15px;font-size:14px;line-height:14px;color:#666;font-weight:400;letter-spacing:0.453px;">Diamètre (in)</div>
<svg style="position:absolute;left:1271.5px;top:477px" width="15" height="15" viewBox="0 0 24 24" fill="none" stroke="#666" stroke-width="1.8" stroke-linecap="round" stroke-linejoin="round" ><circle cx="12" cy="12" r="10"/><path d="M12 16v-4"/><path d="M12 8h.01"/></svg>
<div class="t" style="left:1419.8px;top:478.15px;font-size:14px;line-height:14px;color:#666;font-weight:400;letter-spacing:0.614px;">Guidé</div>
<svg style="position:absolute;left:1461.5px;top:477px" width="15" height="15" viewBox="0 0 24 24" fill="none" stroke="#666" stroke-width="1.8" stroke-linecap="round" stroke-linejoin="round" ><circle cx="12" cy="12" r="10"/><path d="M12 16v-4"/><path d="M12 8h.01"/></svg>
<div class="t" style="left:1489.2px;top:478.15px;font-size:14px;line-height:14px;color:#666;font-weight:400;letter-spacing:0.586px;">Type de centreur</div>
<svg style="position:absolute;left:1605.5px;top:477px" width="15" height="15" viewBox="0 0 24 24" fill="none" stroke="#666" stroke-width="1.8" stroke-linecap="round" stroke-linejoin="round" ><circle cx="12" cy="12" r="10"/><path d="M12 16v-4"/><path d="M12 8h.01"/></svg>
<div class="t" style="left:1306px;top:468.15px;font-size:14px;line-height:14px;color:#666;font-weight:400;letter-spacing:0.557px;">Calcul de</div>
<div class="t" style="left:1306px;top:488.15px;font-size:14px;line-height:14px;color:#666;font-weight:400;letter-spacing:0.783px;">contrainte</div>
<svg style="position:absolute;left:1396px;top:479px" width="12" height="12" viewBox="0 0 24 24" fill="none" stroke="#666" stroke-width="2" stroke-linecap="round" stroke-linejoin="round" ><circle cx="12" cy="12" r="10"/><path d="M12 16v-4"/><path d="M12 8h.01"/></svg>
<div class="t" style="left:1638px;top:468.15px;font-size:14px;line-height:14px;color:#666;font-weight:400;letter-spacing:0.691px;">Guides</div>
<div class="t" style="left:1638px;top:488.15px;font-size:14px;line-height:14px;color:#666;font-weight:400;letter-spacing:1.191px;">par</div>
<svg style="position:absolute;left:1691px;top:479px" width="12" height="12" viewBox="0 0 24 24" fill="none" stroke="#666" stroke-width="2" stroke-linecap="round" stroke-linejoin="round" ><circle cx="12" cy="12" r="10"/><path d="M12 16v-4"/><path d="M12 8h.01"/></svg>
<div class="t" style="left:1715px;top:468.15px;font-size:14px;line-height:14px;color:#666;font-weight:400;letter-spacing:0.537px;">Coef.</div>
<div class="t" style="left:1715px;top:488.15px;font-size:14px;line-height:14px;color:#666;font-weight:400;letter-spacing:0.572px;">Frottement</div>
<svg style="position:absolute;left:1794px;top:479px" width="12" height="12" viewBox="0 0 24 24" fill="none" stroke="#666" stroke-width="2" stroke-linecap="round" stroke-linejoin="round" ><circle cx="12" cy="12" r="10"/><path d="M12 16v-4"/><path d="M12 8h.01"/></svg>
<div class="a" style="left:1818px;top:456px;width:44px;height:56px;overflow:hidden"><div class="t" style="left:0px;top:12.15px;font-size:14px;line-height:14px;color:#6b6b6b;font-weight:400;letter-spacing:0.35px;">Longueur</div><div class="t" style="left:0px;top:32.15px;font-size:14px;line-height:14px;color:#6b6b6b;font-weight:400;letter-spacing:0.35px;">(ft)</div></div>
<svg style="position:absolute;left:596px;top:529px" width="16" height="16" viewBox="0 0 24 24" fill="none" stroke="#555" stroke-width="2.2" stroke-linecap="round" stroke-linejoin="round" ><circle cx="9" cy="12" r="1"/><circle cx="9" cy="5" r="1"/><circle cx="9" cy="19" r="1"/><circle cx="15" cy="12" r="1"/><circle cx="15" cy="5" r="1"/><circle cx="15" cy="19" r="1"/></svg>
<div class="sel" style="left:646px;top:521px;width:119px"><span class="v" style="width:73px;overflow:hidden;display:block">De marque</span></div>
<svg style="position:absolute;left:731.8px;top:527.5px" width="18" height="18" viewBox="0 0 24 24" fill="none" stroke="#999" stroke-width="1.4" stroke-linecap="round" stroke-linejoin="round" ><path d="m6 9 6 6 6-6"/></svg>
<div class="sel" style="left:778px;top:521px;width:128px"><span class="v" style="width:82px;overflow:hidden;display:block">Tige de pom</span></div>
<svg style="position:absolute;left:872.8px;top:527.5px" width="18" height="18" viewBox="0 0 24 24" fill="none" stroke="#999" stroke-width="1.4" stroke-linecap="round" stroke-linejoin="round" ><path d="m6 9 6 6 6-6"/></svg>
<div class="sel" style="left:918px;top:521px;width:144px"><span class="v" style="width:98px;overflow:hidden;display:block">Weatherford</span></div>
<svg style="position:absolute;left:1028.8px;top:527.5px" width="18" height="18" viewBox="0 0 24 24" fill="none" stroke="#999" stroke-width="1.4" stroke-linecap="round" stroke-linejoin="round" ><path d="m6 9 6 6 6-6"/></svg>
<div class="sel" style="left:1074px;top:521px;width:96px"><span class="v" style="width:50px;overflow:hidden;display:block">HD</span></div>
<svg style="position:absolute;left:1136.8px;top:527.5px" width="18" height="18" viewBox="0 0 24 24" fill="none" stroke="#999" stroke-width="1.4" stroke-linecap="round" stroke-linejoin="round" ><path d="m6 9 6 6 6-6"/></svg>
<div class="sel" style="left:1182px;top:521px;width:112px"><span class="v" style="width:66px;overflow:hidden;display:block">1</span></div>
<svg style="position:absolute;left:1260.8px;top:527.5px" width="18" height="18" viewBox="0 0 24 24" fill="none" stroke="#999" stroke-width="1.4" stroke-linecap="round" stroke-linejoin="round" ><path d="m6 9 6 6 6-6"/></svg>
<div class="sel" style="left:1306px;top:521px;width:102px"><span class="v" style="width:56px;overflow:hidden;display:block">T/2.8</span></div>
<svg style="position:absolute;left:1374.8px;top:527.5px" width="18" height="18" viewBox="0 0 24 24" fill="none" stroke="#999" stroke-width="1.4" stroke-linecap="round" stroke-linejoin="round" ><path d="m6 9 6 6 6-6"/></svg>
<div class="a" style="left:1440px;top:528px;width:16px;height:16px;border:1px solid #dcdcdc;border-radius:4px;background:#fff"></div>
<div class="sel" style="left:1489px;top:521px;width:137px;background:#f3f3f3"><span class="v" style="color:#777">Sélectionner</span></div>
<svg style="position:absolute;left:1595.8px;top:528.3px" width="18" height="18" viewBox="0 0 24 24" fill="none" stroke="#777" stroke-width="1.5" stroke-linecap="round" stroke-linejoin="round" ><path d="m7 15 5 5 5-5"/><path d="m7 9 5-5 5 5"/></svg>
<div class="sel" style="left:1638px;top:521px;width:65px;border-color:#ececec;box-shadow:none"><span class="v" style="color:#9a9a9a;top:1px">0</span></div>
<div class="sel" style="left:1715px;top:521px;width:91px"><span class="v" style="top:1px">0.25</span></div>
<div class="a" style="left:1818px;top:521px;width:44px;height:32px;overflow:hidden"><div class="sel" style="left:0;top:0;width:90px"><span class="v" style="top:1px">100.0</span></div></div>
<div class="a" style="left:588px;top:561px;width:1274px;height:1px;background:#e5e5e5"></div>
<svg style="position:absolute;left:596px;top:578px" width="16" height="16" viewBox="0 0 24 24" fill="none" stroke="#555" stroke-width="2.2" stroke-linecap="round" stroke-linejoin="round" ><circle cx="9" cy="12" r="1"/><circle cx="9" cy="5" r="1"/><circle cx="9" cy="19" r="1"/><circle cx="15" cy="12" r="1"/><circle cx="15" cy="5" r="1"/><circle cx="15" cy="19" r="1"/></svg>
<div class="sel" style="left:646px;top:570px;width:119px"><span class="v" style="width:73px;overflow:hidden;display:block">De marque</span></div>
<svg style="position:absolute;left:731.8px;top:576.5px" width="18" height="18" viewBox="0 0 24 24" fill="none" stroke="#999" stroke-width="1.4" stroke-linecap="round" stroke-linejoin="round" ><path d="m6 9 6 6 6-6"/></svg>
<div class="sel" style="left:778px;top:570px;width:128px"><span class="v" style="width:82px;overflow:hidden;display:block">Tige de pom</span></div>
<svg style="position:absolute;left:872.8px;top:576.5px" width="18" height="18" viewBox="0 0 24 24" fill="none" stroke="#999" stroke-width="1.4" stroke-linecap="round" stroke-linejoin="round" ><path d="m6 9 6 6 6-6"/></svg>
<div class="sel" style="left:918px;top:570px;width:144px"><span class="v" style="width:98px;overflow:hidden;display:block">API</span></div>
<svg style="position:absolute;left:1028.8px;top:576.5px" width="18" height="18" viewBox="0 0 24 24" fill="none" stroke="#999" stroke-width="1.4" stroke-linecap="round" stroke-linejoin="round" ><path d="m6 9 6 6 6-6"/></svg>
<div class="sel" style="left:1074px;top:570px;width:96px"><span class="v" style="width:50px;overflow:hidden;display:block">D</span></div>
<svg style="position:absolute;left:1136.8px;top:576.5px" width="18" height="18" viewBox="0 0 24 24" fill="none" stroke="#999" stroke-width="1.4" stroke-linecap="round" stroke-linejoin="round" ><path d="m6 9 6 6 6-6"/></svg>
<div class="sel" style="left:1182px;top:570px;width:112px"><span class="v" style="width:66px;overflow:hidden;display:block">1</span></div>
<svg style="position:absolute;left:1260.8px;top:576.5px" width="18" height="18" viewBox="0 0 24 24" fill="none" stroke="#999" stroke-width="1.4" stroke-linecap="round" stroke-linejoin="round" ><path d="m6 9 6 6 6-6"/></svg>
<div class="sel" style="left:1306px;top:570px;width:102px"><span class="v" style="width:56px;overflow:hidden;display:block">T/4</span></div>
<svg style="position:absolute;left:1374.8px;top:576.5px" width="18" height="18" viewBox="0 0 24 24" fill="none" stroke="#999" stroke-width="1.4" stroke-linecap="round" stroke-linejoin="round" ><path d="m6 9 6 6 6-6"/></svg>
<div class="a" style="left:1440px;top:577px;width:16px;height:16px;border:1px solid #dcdcdc;border-radius:4px;background:#fff"></div>
<div class="sel" style="left:1489px;top:570px;width:137px;background:#f3f3f3"><span class="v" style="color:#777">Sélectionner</span></div>
<svg style="position:absolute;left:1595.8px;top:577.3px" width="18" height="18" viewBox="0 0 24 24" fill="none" stroke="#777" stroke-width="1.5" stroke-linecap="round" stroke-linejoin="round" ><path d="m7 15 5 5 5-5"/><path d="m7 9 5-5 5 5"/></svg>
<div class="sel" style="left:1638px;top:570px;width:65px;border-color:#ececec;box-shadow:none"><span class="v" style="color:#9a9a9a;top:1px">0</span></div>
<div class="sel" style="left:1715px;top:570px;width:91px"><span class="v" style="top:1px">0.25</span></div>
<div class="a" style="left:1818px;top:570px;width:44px;height:32px;overflow:hidden"><div class="sel" style="left:0;top:0;width:90px"><span class="v" style="top:1px">937.0</span></div></div>
<div class="a" style="left:588px;top:610px;width:1274px;height:1px;background:#e5e5e5"></div>
<svg style="position:absolute;left:596px;top:627px" width="16" height="16" viewBox="0 0 24 24" fill="none" stroke="#555" stroke-width="2.2" stroke-linecap="round" stroke-linejoin="round" ><circle cx="9" cy="12" r="1"/><circle cx="9" cy="5" r="1"/><circle cx="9" cy="19" r="1"/><circle cx="15" cy="12" r="1"/><circle cx="15" cy="5" r="1"/><circle cx="15" cy="19" r="1"/></svg>
<div class="sel" style="left:646px;top:619px;width:119px"><span class="v" style="width:73px;overflow:hidden;display:block">De marque</span></div>
<svg style="position:absolute;left:731.8px;top:625.5px" width="18" height="18" viewBox="0 0 24 24" fill="none" stroke="#999" stroke-width="1.4" stroke-linecap="round" stroke-linejoin="round" ><path d="m6 9 6 6 6-6"/></svg>
<div class="sel" style="left:778px;top:619px;width:128px"><span class="v" style="width:82px;overflow:hidden;display:block">Fibre de verre</span></div>
<svg style="position:absolute;left:872.8px;top:625.5px" width="18" height="18" viewBox="0 0 24 24" fill="none" stroke="#999" stroke-width="1.4" stroke-linecap="round" stroke-linejoin="round" ><path d="m6 9 6 6 6-6"/></svg>
<div class="sel" style="left:918px;top:619px;width:144px"><span class="v" style="width:98px;overflow:hidden;display:block">ELS</span></div>
<svg style="position:absolute;left:1028.8px;top:625.5px" width="18" height="18" viewBox="0 0 24 24" fill="none" stroke="#999" stroke-width="1.4" stroke-linecap="round" stroke-linejoin="round" ><path d="m6 9 6 6 6-6"/></svg>
<div class="sel" style="left:1074px;top:619px;width:96px"><span class="v" style="width:50px;overflow:hidden;display:block">Series 3</span></div>
<svg style="position:absolute;left:1136.8px;top:625.5px" width="18" height="18" viewBox="0 0 24 24" fill="none" stroke="#999" stroke-width="1.4" stroke-linecap="round" stroke-linejoin="round" ><path d="m6 9 6 6 6-6"/></svg>
<div class="sel" style="left:1182px;top:619px;width:112px"><span class="v" style="width:66px;overflow:hidden;display:block">1 1/4</span></div>
<svg style="position:absolute;left:1260.8px;top:625.5px" width="18" height="18" viewBox="0 0 24 24" fill="none" stroke="#999" stroke-width="1.4" stroke-linecap="round" stroke-linejoin="round" ><path d="m6 9 6 6 6-6"/></svg>
<div class="sel" style="left:1306px;top:619px;width:102px"><span class="v" style="width:56px;overflow:hidden;display:block">ELS 300</span></div>
<svg style="position:absolute;left:1374.8px;top:625.5px" width="18" height="18" viewBox="0 0 24 24" fill="none" stroke="#999" stroke-width="1.4" stroke-linecap="round" stroke-linejoin="round" ><path d="m6 9 6 6 6-6"/></svg>
<div class="a" style="left:1440px;top:626px;width:16px;height:16px;border:1px solid #dcdcdc;border-radius:4px;background:#fff"></div>
<div class="sel" style="left:1489px;top:619px;width:137px;background:#f3f3f3"><span class="v" style="color:#777">Sélectionner</span></div>
<svg style="position:absolute;left:1595.8px;top:626.3px" width="18" height="18" viewBox="0 0 24 24" fill="none" stroke="#777" stroke-width="1.5" stroke-linecap="round" stroke-linejoin="round" ><path d="m7 15 5 5 5-5"/><path d="m7 9 5-5 5 5"/></svg>
<div class="sel" style="left:1638px;top:619px;width:65px;border-color:#ececec;box-shadow:none"><span class="v" style="color:#9a9a9a;top:1px">0</span></div>
<div class="sel" style="left:1715px;top:619px;width:91px"><span class="v" style="top:1px">0.25</span></div>
<div class="a" style="left:1818px;top:619px;width:44px;height:32px;overflow:hidden"><div class="sel" style="left:0;top:0;width:90px"><span class="v" style="top:1px">2325</span></div></div>
<div class="a" style="left:588px;top:659px;width:1274px;height:1px;background:#e5e5e5"></div>
<svg style="position:absolute;left:596px;top:676px" width="16" height="16" viewBox="0 0 24 24" fill="none" stroke="#555" stroke-width="2.2" stroke-linecap="round" stroke-linejoin="round" ><circle cx="9" cy="12" r="1"/><circle cx="9" cy="5" r="1"/><circle cx="9" cy="19" r="1"/><circle cx="15" cy="12" r="1"/><circle cx="15" cy="5" r="1"/><circle cx="15" cy="19" r="1"/></svg>
<div class="sel" style="left:646px;top:668px;width:119px"><span class="v" style="width:73px;overflow:hidden;display:block">De marque</span></div>
<svg style="position:absolute;left:731.8px;top:674.5px" width="18" height="18" viewBox="0 0 24 24" fill="none" stroke="#999" stroke-width="1.4" stroke-linecap="round" stroke-linejoin="round" ><path d="m6 9 6 6 6-6"/></svg>
<div class="sel" style="left:778px;top:668px;width:128px"><span class="v" style="width:82px;overflow:hidden;display:block">Fibre de verre</span></div>
<svg style="position:absolute;left:872.8px;top:674.5px" width="18" height="18" viewBox="0 0 24 24" fill="none" stroke="#999" stroke-width="1.4" stroke-linecap="round" stroke-linejoin="round" ><path d="m6 9 6 6 6-6"/></svg>
<div class="sel" style="left:918px;top:668px;width:144px"><span class="v" style="width:98px;overflow:hidden;display:block">ELS</span></div>
<svg style="position:absolute;left:1028.8px;top:674.5px" width="18" height="18" viewBox="0 0 24 24" fill="none" stroke="#999" stroke-width="1.4" stroke-linecap="round" stroke-linejoin="round" ><path d="m6 9 6 6 6-6"/></svg>
<div class="sel" style="left:1074px;top:668px;width:96px"><span class="v" style="width:50px;overflow:hidden;display:block">Series 3</span></div>
<svg style="position:absolute;left:1136.8px;top:674.5px" width="18" height="18" viewBox="0 0 24 24" fill="none" stroke="#999" stroke-width="1.4" stroke-linecap="round" stroke-linejoin="round" ><path d="m6 9 6 6 6-6"/></svg>
<div class="sel" style="left:1182px;top:668px;width:112px"><span class="v" style="width:66px;overflow:hidden;display:block">1 1/4</span></div>
<svg style="position:absolute;left:1260.8px;top:674.5px" width="18" height="18" viewBox="0 0 24 24" fill="none" stroke="#999" stroke-width="1.4" stroke-linecap="round" stroke-linejoin="round" ><path d="m6 9 6 6 6-6"/></svg>
<div class="sel" style="left:1306px;top:668px;width:102px"><span class="v" style="width:56px;overflow:hidden;display:block">ELS 300</span></div>
<svg style="position:absolute;left:1374.8px;top:674.5px" width="18" height="18" viewBox="0 0 24 24" fill="none" stroke="#999" stroke-width="1.4" stroke-linecap="round" stroke-linejoin="round" ><path d="m6 9 6 6 6-6"/></svg>
<div class="a" style="left:1440px;top:675px;width:16px;height:16px;border:1px solid #dcdcdc;border-radius:4px;background:#fff"></div>
<div class="sel" style="left:1489px;top:668px;width:137px;background:#f3f3f3"><span class="v" style="color:#777">Sélectionner</span></div>
<svg style="position:absolute;left:1595.8px;top:675.3px" width="18" height="18" viewBox="0 0 24 24" fill="none" stroke="#777" stroke-width="1.5" stroke-linecap="round" stroke-linejoin="round" ><path d="m7 15 5 5 5-5"/><path d="m7 9 5-5 5 5"/></svg>
<div class="sel" style="left:1638px;top:668px;width:65px;border-color:#ececec;box-shadow:none"><span class="v" style="color:#9a9a9a;top:1px">0</span></div>
<div class="sel" style="left:1715px;top:668px;width:91px"><span class="v" style="top:1px">0.25</span></div>
<div class="a" style="left:1818px;top:668px;width:44px;height:32px;overflow:hidden"><div class="sel" style="left:0;top:0;width:90px"><span class="v" style="top:1px">750.0</span></div></div>
<div class="a" style="left:588px;top:708px;width:1274px;height:1px;background:#e5e5e5"></div>
<svg style="position:absolute;left:596px;top:725px" width="16" height="16" viewBox="0 0 24 24" fill="none" stroke="#555" stroke-width="2.2" stroke-linecap="round" stroke-linejoin="round" ><circle cx="9" cy="12" r="1"/><circle cx="9" cy="5" r="1"/><circle cx="9" cy="19" r="1"/><circle cx="15" cy="12" r="1"/><circle cx="15" cy="5" r="1"/><circle cx="15" cy="19" r="1"/></svg>
<div class="sel" style="left:646px;top:717px;width:119px"><span class="v" style="width:73px;overflow:hidden;display:block">De marque</span></div>
<svg style="position:absolute;left:731.8px;top:723.5px" width="18" height="18" viewBox="0 0 24 24" fill="none" stroke="#999" stroke-width="1.4" stroke-linecap="round" stroke-linejoin="round" ><path d="m6 9 6 6 6-6"/></svg>
<div class="sel" style="left:778px;top:717px;width:128px"><span class="v" style="width:82px;overflow:hidden;display:block">Tige de pom</span></div>
<svg style="position:absolute;left:872.8px;top:723.5px" width="18" height="18" viewBox="0 0 24 24" fill="none" stroke="#999" stroke-width="1.4" stroke-linecap="round" stroke-linejoin="round" ><path d="m6 9 6 6 6-6"/></svg>
<div class="sel" style="left:918px;top:717px;width:144px"><span class="v" style="width:98px;overflow:hidden;display:block">Weatherford</span></div>
<svg style="position:absolute;left:1028.8px;top:723.5px" width="18" height="18" viewBox="0 0 24 24" fill="none" stroke="#999" stroke-width="1.4" stroke-linecap="round" stroke-linejoin="round" ><path d="m6 9 6 6 6-6"/></svg>
<div class="sel" style="left:1074px;top:717px;width:96px"><span class="v" style="width:50px;overflow:hidden;display:block">HD</span></div>
<svg style="position:absolute;left:1136.8px;top:723.5px" width="18" height="18" viewBox="0 0 24 24" fill="none" stroke="#999" stroke-width="1.4" stroke-linecap="round" stroke-linejoin="round" ><path d="m6 9 6 6 6-6"/></svg>
<div class="sel" style="left:1182px;top:717px;width:112px"><span class="v" style="width:66px;overflow:hidden;display:block">1</span></div>
<svg style="position:absolute;left:1260.8px;top:723.5px" width="18" height="18" viewBox="0 0 24 24" fill="none" stroke="#999" stroke-width="1.4" stroke-linecap="round" stroke-linejoin="round" ><path d="m6 9 6 6 6-6"/></svg>
<div class="sel" style="left:1306px;top:717px;width:102px"><span class="v" style="width:56px;overflow:hidden;display:block">T/2.8</span></div>
<svg style="position:absolute;left:1374.8px;top:723.5px" width="18" height="18" viewBox="0 0 24 24" fill="none" stroke="#999" stroke-width="1.4" stroke-linecap="round" stroke-linejoin="round" ><path d="m6 9 6 6 6-6"/></svg>
<div class="a" style="left:1440px;top:724px;width:16px;height:16px;border-radius:4px;background:#1d3fb8"></div><svg style="position:absolute;left:1442px;top:726px" width="12" height="12" viewBox="0 0 24 24" fill="none" stroke="#fff" stroke-width="2.4" stroke-linecap="round" stroke-linejoin="round" ><path d="M20 6 9 17l-5-5"/></svg>
<div class="sel" style="left:1489px;top:717px;width:137px"><span class="v">Molded AU</span></div>
<svg style="position:absolute;left:1595.8px;top:724.3px" width="18" height="18" viewBox="0 0 24 24" fill="none" stroke="#777" stroke-width="1.5" stroke-linecap="round" stroke-linejoin="round" ><path d="m7 15 5 5 5-5"/><path d="m7 9 5-5 5 5"/></svg>
<div class="sel" style="left:1638px;top:717px;width:65px;border-color:#ececec;box-shadow:none"><span class="v" style="color:#9a9a9a;top:1px">6</span></div>
<div class="sel" style="left:1715px;top:717px;width:91px"><span class="v" style="top:1px">0.25</span></div>
<div class="a" style="left:1818px;top:717px;width:44px;height:32px;overflow:hidden"><div class="sel" style="left:0;top:0;width:90px"><span class="v" style="top:1px">1350</span></div></div>
<div class="a" style="left:588px;top:757px;width:1274px;height:1px;background:#e5e5e5"></div>
<svg style="position:absolute;left:596px;top:774px" width="16" height="16" viewBox="0 0 24 24" fill="none" stroke="#555" stroke-width="2.2" stroke-linecap="round" stroke-linejoin="round" ><circle cx="9" cy="12" r="1"/><circle cx="9" cy="5" r="1"/><circle cx="9" cy="19" r="1"/><circle cx="15" cy="12" r="1"/><circle cx="15" cy="5" r="1"/><circle cx="15" cy="19" r="1"/></svg>
<div class="sel" style="left:646px;top:766px;width:119px"><span class="v" style="width:73px;overflow:hidden;display:block">De marque</span></div>
<svg style="position:absolute;left:731.8px;top:772.5px" width="18" height="18" viewBox="0 0 24 24" fill="none" stroke="#999" stroke-width="1.4" stroke-linecap="round" stroke-linejoin="round" ><path d="m6 9 6 6 6-6"/></svg>
<div class="sel" style="left:778px;top:766px;width:128px"><span class="v" style="width:82px;overflow:hidden;display:block">Tige de pom</span></div>
<svg style="position:absolute;left:872.8px;top:772.5px" width="18" height="18" viewBox="0 0 24 24" fill="none" stroke="#999" stroke-width="1.4" stroke-linecap="round" stroke-linejoin="round" ><path d="m6 9 6 6 6-6"/></svg>
<div class="sel" style="left:918px;top:766px;width:144px"><span class="v" style="width:98px;overflow:hidden;display:block">Weatherford</span></div>
<svg style="position:absolute;left:1028.8px;top:772.5px" width="18" height="18" viewBox="0 0 24 24" fill="none" stroke="#999" stroke-width="1.4" stroke-linecap="round" stroke-linejoin="round" ><path d="m6 9 6 6 6-6"/></svg>
<div class="sel" style="left:1074px;top:766px;width:96px"><span class="v" style="width:50px;overflow:hidden;display:block">HD</span></div>
<svg style="position:absolute;left:1136.8px;top:772.5px" width="18" height="18" viewBox="0 0 24 24" fill="none" stroke="#999" stroke-width="1.4" stroke-linecap="round" stroke-linejoin="round" ><path d="m6 9 6 6 6-6"/></svg>
<div class="sel" style="left:1182px;top:766px;width:112px"><span class="v" style="width:66px;overflow:hidden;display:block">7/8</span></div>
<svg style="position:absolute;left:1260.8px;top:772.5px" width="18" height="18" viewBox="0 0 24 24" fill="none" stroke="#999" stroke-width="1.4" stroke-linecap="round" stroke-linejoin="round" ><path d="m6 9 6 6 6-6"/></svg>
<div class="sel" style="left:1306px;top:766px;width:102px"><span class="v" style="width:56px;overflow:hidden;display:block">T/2.8</span></div>
<svg style="position:absolute;left:1374.8px;top:772.5px" width="18" height="18" viewBox="0 0 24 24" fill="none" stroke="#999" stroke-width="1.4" stroke-linecap="round" stroke-linejoin="round" ><path d="m6 9 6 6 6-6"/></svg>
<div class="a" style="left:1440px;top:773px;width:16px;height:16px;border-radius:4px;background:#1d3fb8"></div><svg style="position:absolute;left:1442px;top:775px" width="12" height="12" viewBox="0 0 24 24" fill="none" stroke="#fff" stroke-width="2.4" stroke-linecap="round" stroke-linejoin="round" ><path d="M20 6 9 17l-5-5"/></svg>
<div class="sel" style="left:1489px;top:766px;width:137px"><span class="v">Molded AU</span></div>
<svg style="position:absolute;left:1595.8px;top:773.3px" width="18" height="18" viewBox="0 0 24 24" fill="none" stroke="#777" stroke-width="1.5" stroke-linecap="round" stroke-linejoin="round" ><path d="m7 15 5 5 5-5"/><path d="m7 9 5-5 5 5"/></svg>
<div class="sel" style="left:1638px;top:766px;width:65px;border-color:#ececec;box-shadow:none"><span class="v" style="color:#9a9a9a;top:1px">10</span></div>
<div class="sel" style="left:1715px;top:766px;width:91px"><span class="v" style="top:1px">0.25</span></div>
<div class="a" style="left:1818px;top:766px;width:44px;height:32px;overflow:hidden"><div class="sel" style="left:0;top:0;width:90px"><span class="v" style="top:1px">1450</span></div></div>
<div class="a" style="left:588px;top:806px;width:1274px;height:1px;background:#e5e5e5"></div>
<svg style="position:absolute;left:596px;top:823px" width="16" height="16" viewBox="0 0 24 24" fill="none" stroke="#555" stroke-width="2.2" stroke-linecap="round" stroke-linejoin="round" ><circle cx="9" cy="12" r="1"/><circle cx="9" cy="5" r="1"/><circle cx="9" cy="19" r="1"/><circle cx="15" cy="12" r="1"/><circle cx="15" cy="5" r="1"/><circle cx="15" cy="19" r="1"/></svg>
<div class="sel" style="left:646px;top:815px;width:119px"><span class="v" style="width:73px;overflow:hidden;display:block">De marque</span></div>
<svg style="position:absolute;left:731.8px;top:821.5px" width="18" height="18" viewBox="0 0 24 24" fill="none" stroke="#999" stroke-width="1.4" stroke-linecap="round" stroke-linejoin="round" ><path d="m6 9 6 6 6-6"/></svg>
<div class="sel" style="left:778px;top:815px;width:128px"><span class="v" style="width:82px;overflow:hidden;display:block">Tige de pom</span></div>
<svg style="position:absolute;left:872.8px;top:821.5px" width="18" height="18" viewBox="0 0 24 24" fill="none" stroke="#999" stroke-width="1.4" stroke-linecap="round" stroke-linejoin="round" ><path d="m6 9 6 6 6-6"/></svg>
<div class="sel" style="left:918px;top:815px;width:144px"><span class="v" style="width:98px;overflow:hidden;display:block">Weatherford</span></div>
<svg style="position:absolute;left:1028.8px;top:821.5px" width="18" height="18" viewBox="0 0 24 24" fill="none" stroke="#999" stroke-width="1.4" stroke-linecap="round" stroke-linejoin="round" ><path d="m6 9 6 6 6-6"/></svg>
<div class="sel" style="left:1074px;top:815px;width:96px"><span class="v" style="width:50px;overflow:hidden;display:block">HD</span></div>
<svg style="position:absolute;left:1136.8px;top:821.5px" width="18" height="18" viewBox="0 0 24 24" fill="none" stroke="#999" stroke-width="1.4" stroke-linecap="round" stroke-linejoin="round" ><path d="m6 9 6 6 6-6"/></svg>
<div class="sel" style="left:1182px;top:815px;width:112px"><span class="v" style="width:66px;overflow:hidden;display:block">7/8</span></div>
<svg style="position:absolute;left:1260.8px;top:821.5px" width="18" height="18" viewBox="0 0 24 24" fill="none" stroke="#999" stroke-width="1.4" stroke-linecap="round" stroke-linejoin="round" ><path d="m6 9 6 6 6-6"/></svg>
<div class="sel" style="left:1306px;top:815px;width:102px"><span class="v" style="width:56px;overflow:hidden;display:block">T/2.8</span></div>
<svg style="position:absolute;left:1374.8px;top:821.5px" width="18" height="18" viewBox="0 0 24 24" fill="none" stroke="#999" stroke-width="1.4" stroke-linecap="round" stroke-linejoin="round" ><path d="m6 9 6 6 6-6"/></svg>
<div class="a" style="left:1440px;top:822px;width:16px;height:16px;border:1px solid #dcdcdc;border-radius:4px;background:#fff"></div>
<div class="sel" style="left:1489px;top:815px;width:137px;background:#f3f3f3"><span class="v" style="color:#777">Sélectionner</span></div>
<svg style="position:absolute;left:1595.8px;top:822.3px" width="18" height="18" viewBox="0 0 24 24" fill="none" stroke="#777" stroke-width="1.5" stroke-linecap="round" stroke-linejoin="round" ><path d="m7 15 5 5 5-5"/><path d="m7 9 5-5 5 5"/></svg>
<div class="sel" style="left:1638px;top:815px;width:65px;border-color:#ececec;box-shadow:none"><span class="v" style="color:#9a9a9a;top:1px">0</span></div>
<div class="sel" style="left:1715px;top:815px;width:91px"><span class="v" style="top:1px">0.25</span></div>
<div class="a" style="left:1818px;top:815px;width:44px;height:32px;overflow:hidden"><div class="sel" style="left:0;top:0;width:90px"><span class="v" style="top:1px">675.0</span></div></div>
<div class="a" style="left:588px;top:855px;width:1274px;height:1px;background:#e5e5e5"></div>
<svg style="position:absolute;left:596px;top:872px" width="16" height="16" viewBox="0 0 24 24" fill="none" stroke="#555" stroke-width="2.2" stroke-linecap="round" stroke-linejoin="round" ><circle cx="9" cy="12" r="1"/><circle cx="9" cy="5" r="1"/><circle cx="9" cy="19" r="1"/><circle cx="15" cy="12" r="1"/><circle cx="15" cy="5" r="1"/><circle cx="15" cy="19" r="1"/></svg>
<div class="sel" style="left:646px;top:864px;width:119px"><span class="v" style="width:73px;overflow:hidden;display:block">De marque</span></div>
<svg style="position:absolute;left:731.8px;top:870.5px" width="18" height="18" viewBox="0 0 24 24" fill="none" stroke="#999" stroke-width="1.4" stroke-linecap="round" stroke-linejoin="round" ><path d="m6 9 6 6 6-6"/></svg>
<div class="sel" style="left:778px;top:864px;width:128px"><span class="v" style="width:82px;overflow:hidden;display:block">Tige de charge</span></div>
<svg style="position:absolute;left:872.8px;top:870.5px" width="18" height="18" viewBox="0 0 24 24" fill="none" stroke="#999" stroke-width="1.4" stroke-linecap="round" stroke-linejoin="round" ><path d="m6 9 6 6 6-6"/></svg>
<div class="sel" style="left:918px;top:864px;width:144px"><span class="v" style="width:98px;overflow:hidden;display:block">API</span></div>
<svg style="position:absolute;left:1028.8px;top:870.5px" width="18" height="18" viewBox="0 0 24 24" fill="none" stroke="#999" stroke-width="1.4" stroke-linecap="round" stroke-linejoin="round" ><path d="m6 9 6 6 6-6"/></svg>
<div class="sel" style="left:1074px;top:864px;width:96px"><span class="v" style="width:50px;overflow:hidden;display:block">D (Sinker)</span></div>
<svg style="position:absolute;left:1136.8px;top:870.5px" width="18" height="18" viewBox="0 0 24 24" fill="none" stroke="#999" stroke-width="1.4" stroke-linecap="round" stroke-linejoin="round" ><path d="m6 9 6 6 6-6"/></svg>
<div class="sel" style="left:1182px;top:864px;width:112px"><span class="v" style="width:66px;overflow:hidden;display:block">1 1/2</span></div>
<svg style="position:absolute;left:1260.8px;top:870.5px" width="18" height="18" viewBox="0 0 24 24" fill="none" stroke="#999" stroke-width="1.4" stroke-linecap="round" stroke-linejoin="round" ><path d="m6 9 6 6 6-6"/></svg>
<div class="sel" style="left:1306px;top:864px;width:102px"><span class="v" style="width:56px;overflow:hidden;display:block">T/4</span></div>
<svg style="position:absolute;left:1374.8px;top:870.5px" width="18" height="18" viewBox="0 0 24 24" fill="none" stroke="#999" stroke-width="1.4" stroke-linecap="round" stroke-linejoin="round" ><path d="m6 9 6 6 6-6"/></svg>
<div class="a" style="left:1440px;top:871px;width:16px;height:16px;border:1px solid #dcdcdc;border-radius:4px;background:#fff"></div>
<div class="sel" style="left:1489px;top:864px;width:137px;background:#f3f3f3"><span class="v" style="color:#777">Sélectionner</span></div>
<svg style="position:absolute;left:1595.8px;top:871.3px" width="18" height="18" viewBox="0 0 24 24" fill="none" stroke="#777" stroke-width="1.5" stroke-linecap="round" stroke-linejoin="round" ><path d="m7 15 5 5 5-5"/><path d="m7 9 5-5 5 5"/></svg>
<div class="sel" style="left:1638px;top:864px;width:65px;border-color:#ececec;box-shadow:none"><span class="v" style="color:#9a9a9a;top:1px">0</span></div>
<div class="sel" style="left:1715px;top:864px;width:91px"><span class="v" style="top:1px">0.25</span></div>
<div class="a" style="left:1818px;top:864px;width:44px;height:32px;overflow:hidden"><div class="sel" style="left:0;top:0;width:90px"><span class="v" style="top:1px">516.0</span></div></div>
<div class="a" style="left:588px;top:904px;width:1274px;height:1px;background:#e5e5e5"></div>
<div class="a" style="left:588px;top:905px;width:1274px;height:14px;background:#fafafa"></div>
<div class="a" style="left:591px;top:908px;width:1138px;height:8px;border-radius:4px;background:#bdbdbd"></div>
<div class="a" style="left:587px;top:936px;width:150px;height:32px;border-radius:4px;background:#1d3fb8"></div>
<svg style="position:absolute;left:597px;top:944px" width="16" height="16" viewBox="0 0 24 24" fill="none" stroke="#fff" stroke-width="2" stroke-linecap="round" stroke-linejoin="round" ><path d="M5 12h14"/><path d="M12 5v14"/></svg>
<div class="t" style="left:621.5px;top:944.65px;font-size:14px;line-height:14px;color:#fff;font-weight:400;letter-spacing:0.583px;">Ajouter un cône</div>
<div class="t" style="left:1574.4px;top:1011.15px;font-size:14px;line-height:14px;color:#0a0a0a;font-weight:400;letter-spacing:0.376px;">Profondeur du PSN (ftKB)</div>
<div class="a" style="left:1742px;top:1000px;width:120px;height:36px;border:1px solid #ececec;border-radius:5px;background:#fff"></div>
<div class="t" style="left:1795.3px;top:1011.85px;font-size:14px;line-height:14px;color:#8a8a8a;font-weight:400;letter-spacing:0.537px;">8103.00</div>
<div class="t" style="left:1574.4px;top:1055.15px;font-size:14px;line-height:14px;color:#0a0a0a;font-weight:400;letter-spacing:0.519px;">Longueur totale (ft)</div>
<svg style="position:absolute;left:1711.5px;top:1054.5px" width="15" height="15" viewBox="0 0 24 24" fill="none" stroke="#555" stroke-width="1.8" stroke-linecap="round" stroke-linejoin="round" ><circle cx="12" cy="12" r="10"/><path d="M12 16v-4"/><path d="M12 8h.01"/></svg>
<div class="a" style="left:1742px;top:1044px;width:120px;height:40px;border:1px solid #ececec;border-radius:5px;background:#fff"></div>
<div class="t" style="left:1795.3px;top:1055.85px;font-size:14px;line-height:14px;color:#8a8a8a;font-weight:400;letter-spacing:0.537px;">8103.00</div>
<div class="a" style="left:1863px;top:1009px;width:48px;height:48px;border-radius:50%;background:#fff;border:1px solid #e6e6e6;box-shadow:0 4px 10px rgba(0,0,0,0.10)"></div>
<svg style="position:absolute;left:1876px;top:1022px" width="22" height="22" viewBox="0 0 24 24" fill="none" stroke="#111" stroke-width="2" stroke-linecap="round" stroke-linejoin="round" ><circle cx="12" cy="12" r="10"/><path d="M9.09 9a3 3 0 0 1 5.83 1c0 2-3 3-3 3"/><path d="M12 17h.01"/></svg>
</body></html>
